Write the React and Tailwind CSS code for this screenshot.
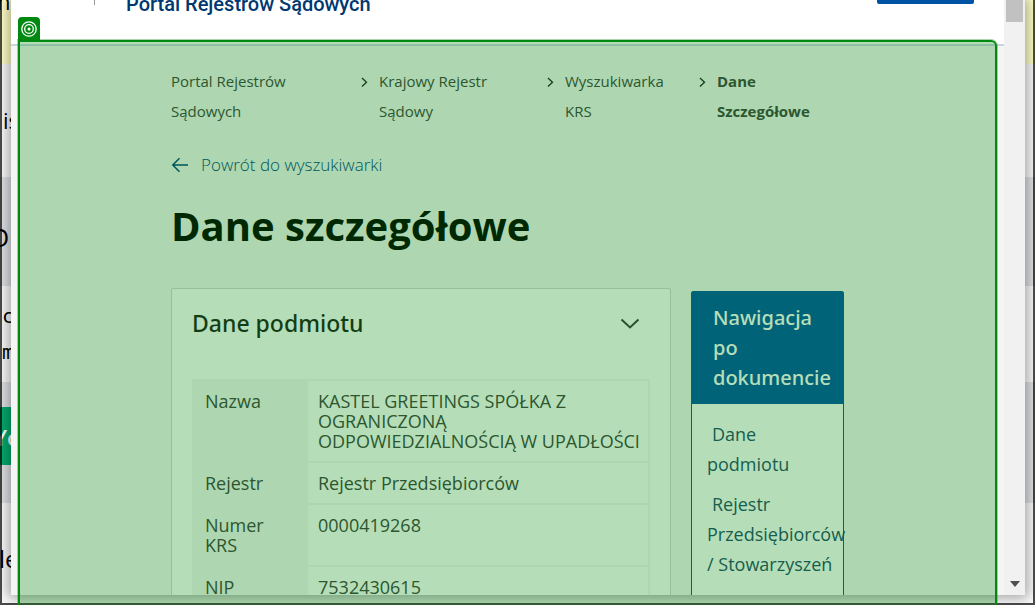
import React from "react";

const crumbs = ["Portal Rejestrów Sądowych", "Krajowy Rejestr Sądowy", "Wyszukiwarka KRS"];

const rows = [
  ["Nazwa", "KASTEL GREETINGS SPÓŁKA Z OGRANICZONĄ ODPOWIEDZIALNOŚCIĄ W UPADŁOŚCI"],
  ["Rejestr", "Rejestr Przedsiębiorców"],
  ["Numer KRS", "0000419268"],
  ["NIP", "7532430615"],
];

const navItems = ["Dane podmiotu", "Rejestr Przedsiębiorców / Stowarzyszeń"];

function Backdrop() {
  return (
    <div className="absolute inset-0 flex flex-col overflow-hidden bg-[#fafafa] text-[22px] whitespace-nowrap text-black">
      <div className="-ml-[3px] h-16 shrink-0 bg-[#ffffc8] leading-[2px]">n</div>
      <div className="h-[113px] shrink-0 px-[3px] pt-[42px] leading-7">is</div>
      <div className="-ml-[11px] h-[109px] shrink-0 bg-[#dfe1e5] pt-11 text-[26px] leading-8">O</div>
      <div className="h-24 shrink-0 px-[2px] pt-3 font-['DejaVu_Sans_Mono',monospace] text-xl leading-9">
        <p>c</p>
        <p>m</p>
      </div>
      <div className="h-[121px] shrink-0 bg-[#dfe1e5] py-[25px]">
        <div className="h-[58px] w-16 bg-[#04aa6d] font-semibold text-white">
          <p className="-ml-[6px] pt-4 leading-7">Yo</p>
        </div>
      </div>
      <div className="-ml-px grow pt-10 text-2xl leading-8">le</div>
      <div className="pointer-events-none absolute inset-0 border-x-2 border-b-2 border-black/70" />
    </div>
  );
}

function Chevron() {
  return (
    <svg className="mt-[10px] h-3 w-[22px] shrink-0" viewBox="0 0 22 12" fill="none" stroke="#1f1f1f" strokeWidth="1.3">
      <path d="M5 2 9.5 6.2 5 10.5" />
    </svg>
  );
}

function Breadcrumbs() {
  return (
    <nav aria-label="breadcrumb">
      <ol className="grid grid-cols-[186fr_186fr_152fr_149fr] text-[15px] leading-[30px] text-[#404040]">
        {crumbs.map((c, i) => (
          <li key={c} className="flex">
            {i > 0 && <Chevron />}
            <a href="#" className={i === 2 ? "max-w-28" : "max-w-32"}>{c}</a>
          </li>
        ))}
        <li className="flex font-bold">
          <Chevron />
          <span>Dane Szczegółowe</span>
        </li>
      </ol>
    </nav>
  );
}

function EntityCard() {
  return (
    <section className="min-w-0 flex-1 rounded-xs border border-[#d5d5d5] bg-white px-5 pt-[15px]">
      <button type="button" className="flex w-full items-center justify-between pr-2 text-left font-['Noto_Sans',sans-serif] text-[23px] leading-[38px] font-medium text-[#1b1b1b]">
        Dane podmiotu
        <svg className="h-6 w-6" viewBox="0 0 24 24" fill="none" stroke="#3a3a3a" strokeWidth="2">
          <path d="m3.500 8.500 8.500 8 8.500-8" />
        </svg>
      </button>
      <table className="mt-[37px] w-full border-collapse border-2 border-[#f5f5f5] text-lg leading-5 text-[#404040]">
        <tbody>
          {rows.map(([k, v]) => (
            <tr key={k} className="border-2 border-[#f5f5f5] align-top">
              <th scope="row" className="w-[115px] bg-[#f5f5f5] py-[10px] pr-8 pl-[11px] text-left font-normal">{k}</th>
              <td className="py-[10px] pr-1 pl-[10px]">{v}</td>
            </tr>
          ))}
        </tbody>
      </table>
    </section>
  );
}

function DocumentNav() {
  return (
    <aside className="mt-[3px] w-[153px] shrink-0 rounded-t-xs border border-[#0052a5] bg-white">
      <h2 className="bg-[#0052a5] pt-[11px] pr-3 pb-[11px] pl-[21px] font-['Noto_Sans',sans-serif] text-xl leading-[30px] font-medium text-white">
        Nawigacja po dokumencie
      </h2>
      <ul className="flex flex-col gap-[10px] pt-[15px] pr-2 pl-[15px] text-lg leading-[30px] text-[#1f4a6b]">
        {navItems.map((n) => (
          <li key={n} className="indent-[5px]"><a href="#">{n}</a></li>
        ))}
      </ul>
    </aside>
  );
}

function PageWindow() {
  return (
    <div className="absolute top-0 right-[10px] bottom-[10px] left-[11px] flex overflow-hidden bg-[#f5f5f5] shadow-[0_0_12px_3px_rgba(0,0,0,0.35)]">
      <div className="min-w-0 flex-1 overflow-hidden">
        <header className="flex h-[46px] items-start justify-between border-b-2 border-[#c8d6e2] bg-white pr-[30px] pl-[83px]">
          <div className="flex items-start">
            <span className="h-[5px] w-px bg-[#999]" />
            <span className="-mt-[10px] ml-[31px] font-['Roboto',sans-serif] text-xl leading-7 font-medium text-[#003870]">
              Portal Rejestrów Sądowych
            </span>
          </div>
          <button type="button" aria-label="Menu" className="h-1 w-[97px] rounded-b-xs bg-[#0052a5]" />
        </header>
        <main className="mx-auto max-w-[673px] pt-5">
          <Breadcrumbs />
          <a href="#" className="mt-[25px] flex items-center gap-3 text-[17px] leading-7 font-light text-[#003f7d]">
            <svg className="h-[18px] w-[18px]" viewBox="0 0 18 18" fill="none" stroke="currentColor" strokeWidth="1.5">
              <path d="M17 9H2M8.500 2.300 1.800 9l6.700 6.700" />
            </svg>
            Powrót do wyszukiwarki
          </a>
          <h1 className="mt-[19px] text-[40px] leading-[56px] font-bold text-black">Dane szczegółowe</h1>
          <div className="mt-[34px] flex items-stretch gap-5">
            <EntityCard />
            <DocumentNav />
          </div>
        </main>
      </div>
      <div className="flex w-[21px] shrink-0 flex-col items-center justify-between bg-[#f1f1f1]">
        <span className="h-[22px] w-[17px] bg-[#c1c1c1]" />
        <svg className="mb-2 h-[6px] w-[10px]" viewBox="0 0 10 6" fill="#505050">
          <path d="M0 0h10L5 6z" />
        </svg>
      </div>
    </div>
  );
}

function Highlight() {
  return (
    <div className="pointer-events-none absolute top-[17px] right-[38px] -bottom-1 left-[18px] flex flex-col">
      <div className="grid h-[23px] w-[22px] place-items-center rounded-t bg-[#008910]">
        <svg className="h-4 w-4" viewBox="0 0 16 16" fill="none" stroke="white" strokeWidth="1.3">
          <circle cx="8" cy="8" r="7.200" />
          <circle cx="8" cy="8" r="4.300" />
          <circle cx="8" cy="8" r="1.500" fill="white" stroke="none" />
        </svg>
      </div>
      <div className="flex-1 rounded-tr-md border-2 border-[#008910] bg-[rgba(0,141,11,0.29)] bg-clip-padding shadow-[0_0_0_1px_rgba(0,137,11,0.35)]" />
    </div>
  );
}

export default function App() {
  return (
    <div className="relative h-screen overflow-hidden font-['Open_Sans','Noto_Sans',sans-serif]">
      <Backdrop />
      <PageWindow />
      <Highlight />
    </div>
  );
}
